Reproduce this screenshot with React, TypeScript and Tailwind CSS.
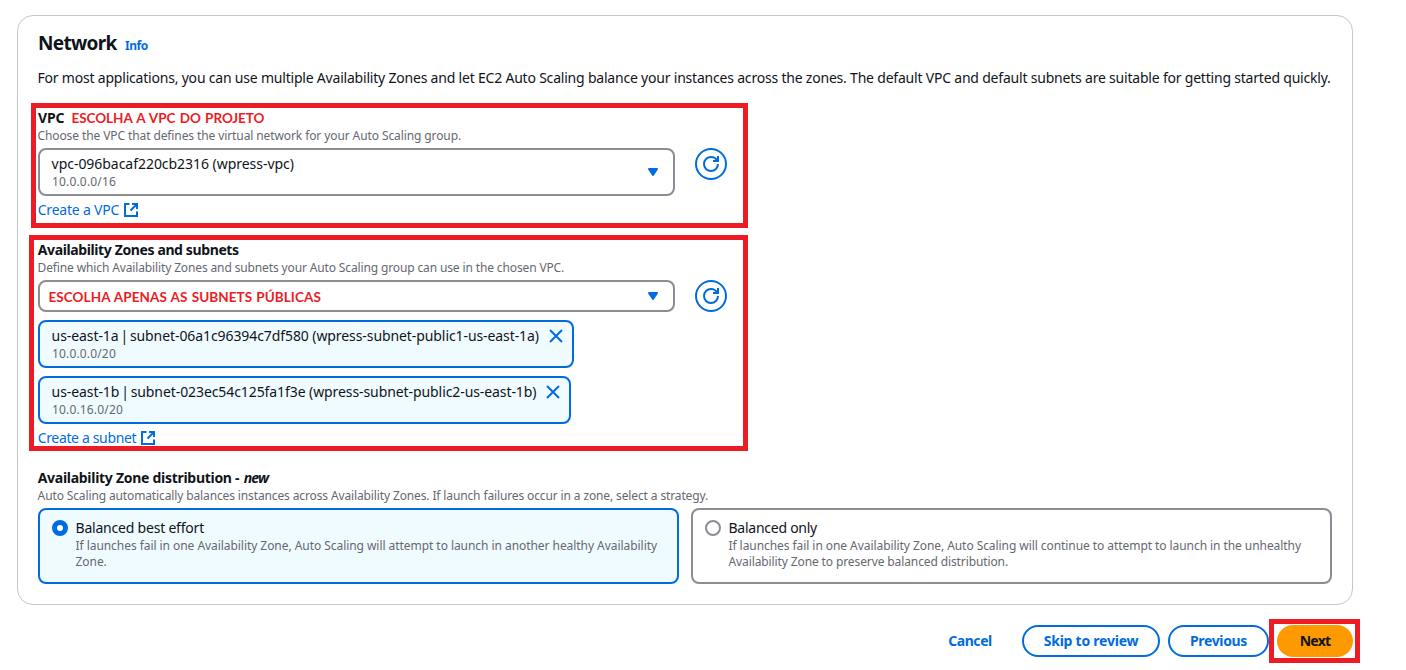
import type { ReactNode } from "react";

function CaretIcon() {
  return (
    <svg viewBox="0 0 16 16" className="size-4 shrink-0 fill-[#006ce0] stroke-[#006ce0] stroke-2" strokeLinejoin="round">
      <path d="M4 5h8l-4 6-4-6z" />
    </svg>
  );
}

function ExternalIcon() {
  return (
    <svg viewBox="0 0 16 16" className="size-4 shrink-0 fill-none stroke-current stroke-2">
      <path d="M9 2h5v5" />
      <path d="m7.5 8.5 6-6" />
      <path d="M14 9.5V14H2V2h4.5" />
    </svg>
  );
}

function CloseIcon() {
  return (
    <svg viewBox="0 0 16 16" className="size-4 shrink-0 fill-none stroke-[#006ce0] stroke-2">
      <path d="m2 2 12 12M14 2 2 14" />
    </svg>
  );
}

function RefreshButton() {
  return (
    <button className="flex size-8 shrink-0 items-center justify-center rounded-full border-2 border-[#006ce0] bg-white">
      <svg viewBox="0 0 16 16" className="size-4 overflow-visible fill-none stroke-[#006ce0] stroke-2">
        <path d="M10 5h5V0" />
        <path d="M15 8a6.957 6.957 0 0 1-7 7 6.957 6.957 0 0 1-7-7 6.957 6.957 0 0 1 7-7 6.87 6.87 0 0 1 6.3 4" />
      </svg>
    </button>
  );
}

function Label({ children }: { children: ReactNode }) {
  return <div className="flex text-sm leading-5 font-bold">{children}</div>;
}

function Hint({ className, children }: { className: string; children: ReactNode }) {
  return <p className={`text-xs leading-4 whitespace-nowrap text-[#656871] ${className}`}>{children}</p>;
}

function CreateLink({ className, children }: { className: string; children: ReactNode }) {
  return (
    <a className="mt-1 flex h-5 items-center gap-1 text-sm leading-5 text-[#006ce0]">
      <span className={className}>{children}</span>
      <ExternalIcon />
    </a>
  );
}

function Token({ zone, subnet, cidr, className }: { zone: string; subnet: string; cidr: string; className: string }) {
  return (
    <div className={`mt-2 flex h-12 justify-between rounded-lg border-2 border-[#006ce0] bg-[#f0fbff] py-1 pr-2 pl-3 ${className}`}>
      <div>
        <div className="-ml-[0.4px] text-sm leading-5 tracking-[-0.085px] whitespace-nowrap">
          {zone} <span className="-mx-[1.7px]">|</span> {subnet}
        </div>
        <Hint className="tracking-[0.16px]">{cidr}</Hint>
      </div>
      <div className="pt-0.5">
        <CloseIcon />
      </div>
    </div>
  );
}

export default function App() {
  return (
    <main className="relative h-[670px] w-[1406px] overflow-hidden bg-white pt-[15px] pl-[17px] font-['Noto_Sans',sans-serif] text-[#0f141a]">
      <section className="h-[590px] w-[1336px] rounded-2xl border border-[#c6c6cd] px-5 pt-[15px]">
        <header className="flex h-6 items-baseline gap-2 leading-6">
          <h2 className="w-[79px] text-[19px] font-bold tracking-[-0.7px]">Network</h2>
          <a className="text-xs font-bold tracking-[-0.45px] text-[#006ce0]">Info</a>
        </header>
        <p className="mt-[13px] -ml-[0.5px] text-sm leading-5 tracking-[-0.204px] whitespace-nowrap">
          For most applications, you can use multiple Availability Zones and let EC2 Auto Scaling balance your instances
          across the zones. The default VPC and default subnets are suitable for getting started quickly.
        </p>

        <div className="mt-5">
          <Label>
            <span className="w-[33.5px] tracking-[-0.2px]">VPC</span>
            <span className="font-['Lato',sans-serif] text-[13.5px] tracking-[-0.05px] text-[#ed1c24] [word-spacing:1.1px]">
              ESCOLHA A VPC DO PROJETO
            </span>
          </Label>
          <Hint className="-ml-[0.5px] tracking-[-0.1px]">
            Choose the VPC that defines the virtual network for your Auto Scaling group.
          </Hint>
          <div className="mt-1 flex gap-5">
            <div className="flex h-12 w-[637px] items-center justify-between rounded-lg border-2 border-[#8c8c94] px-3">
              <div>
                <div className="-ml-[0.4px] text-sm leading-5 tracking-[-0.04px]">vpc-096bacaf220cb2316 (wpress-vpc)</div>
                <Hint className="tracking-[0.167px]">10.0.0.0/16</Hint>
              </div>
              <CaretIcon />
            </div>
            <RefreshButton />
          </div>
          <CreateLink className="-ml-[0.3px] tracking-[-0.2px]">Create a VPC</CreateLink>
        </div>

        <div className="mt-5">
          <Label>
            <span className="-ml-[0.3px] tracking-[-0.38px]">Availability Zones and subnets</span>
          </Label>
          <Hint className="-ml-[0.4px] tracking-[-0.132px]">
            Define which Availability Zones and subnets your Auto Scaling group can use in the chosen VPC.
          </Hint>
          <div className="mt-1 flex gap-5">
            <div className="flex h-8 w-[637px] items-center justify-between rounded-lg border-2 border-[#8c8c94] pr-3 pl-[8.5px]">
              <span className="pt-0.5 font-['Lato',sans-serif] text-[13.5px] leading-5 font-bold tracking-[0.07px] text-[#ed1c24] [word-spacing:0.8px]">
                ESCOLHA APENAS AS SUBNETS PÚBLICAS
              </span>
              <CaretIcon />
            </div>
            <RefreshButton />
          </div>
          <Token
            zone="us-east-1a"
            subnet="subnet-06a1c96394c7df580 (wpress-subnet-public1-us-east-1a)"
            cidr="10.0.0.0/20"
            className="w-[536px]"
          />
          <Token
            zone="us-east-1b"
            subnet="subnet-023ec54c125fa1f3e (wpress-subnet-public2-us-east-1b)"
            cidr="10.0.16.0/20"
            className="w-[533px]"
          />
          <CreateLink className="-ml-[0.3px] tracking-[-0.35px]">Create a subnet</CreateLink>
        </div>

        <div className="mt-5">
          <Label>
            <span className="-ml-[0.3px] w-[206px] tracking-[-0.285px]">Availability Zone distribution -</span>
            <em className="tracking-[-0.9px]">new</em>
          </Label>
          <Hint className="-ml-[0.4px] tracking-[-0.127px]">
            Auto Scaling automatically balances instances across Availability Zones. If launch failures occur in a zone,
            select a strategy.
          </Hint>
          <div className="mt-1 grid grid-cols-2 gap-3">
            <div className="flex h-[76px] gap-2 rounded-lg border-2 border-[#006ce0] bg-[#f0fbff] px-3 pt-2">
              <span className="mt-0.5 size-4 shrink-0 rounded-full border-5 border-[#006ce0] bg-white" />
              <div className="-ml-[0.5px]">
                <div className="text-sm leading-5 tracking-[-0.209px]">Balanced best effort</div>
                <Hint className="tracking-[-0.053px]">
                  If launches fail in one Availability Zone, Auto Scaling will attempt to launch in another healthy
                  Availability
                  <br />
                  Zone.
                </Hint>
              </div>
            </div>
            <div className="flex h-[76px] gap-2 rounded-lg border-2 border-[#8c8c94] px-3 pt-2">
              <span className="mt-0.5 size-4 shrink-0 rounded-full border-2 border-[#8c8c94] bg-white" />
              <div className="-ml-[0.5px]">
                <div className="text-sm leading-5 tracking-[-0.255px]">Balanced only</div>
                <Hint className="tracking-[-0.065px]">
                  If launches fail in one Availability Zone, Auto Scaling will continue to attempt to launch in the
                  unhealthy
                  <br />
                  <span className="tracking-[-0.11px]">Availability Zone to preserve balanced distribution.</span>
                </Hint>
              </div>
            </div>
          </div>
        </div>
      </section>

      <footer className="mt-5 flex w-[1336px] justify-end gap-2 text-sm leading-5 font-bold text-[#006ce0]">
        <button className="h-8 w-[88px] tracking-[-0.45px]">Cancel</button>
        <button className="h-8 w-[138px] rounded-full border-2 border-[#006ce0] tracking-[-0.24px]">Skip to review</button>
        <button className="h-8 w-[101px] rounded-full border-2 border-[#006ce0] tracking-[-0.35px]">Previous</button>
        <button className="h-8 w-[76px] rounded-full bg-[#ff9900] tracking-[-0.75px] text-[#0f141a]">Next</button>
      </footer>

      <div className="pointer-events-none absolute top-[103px] left-[31px] h-[125px] w-[717px] border-5 border-[#ed1c24]" />
      <div className="pointer-events-none absolute top-[235px] left-[29px] h-[216px] w-[719px] border-5 border-[#ed1c24]" />
      <div className="pointer-events-none absolute top-[619px] left-[1269px] h-11 w-[91px] border-5 border-[#ed1c24]" />
    </main>
  );
}
